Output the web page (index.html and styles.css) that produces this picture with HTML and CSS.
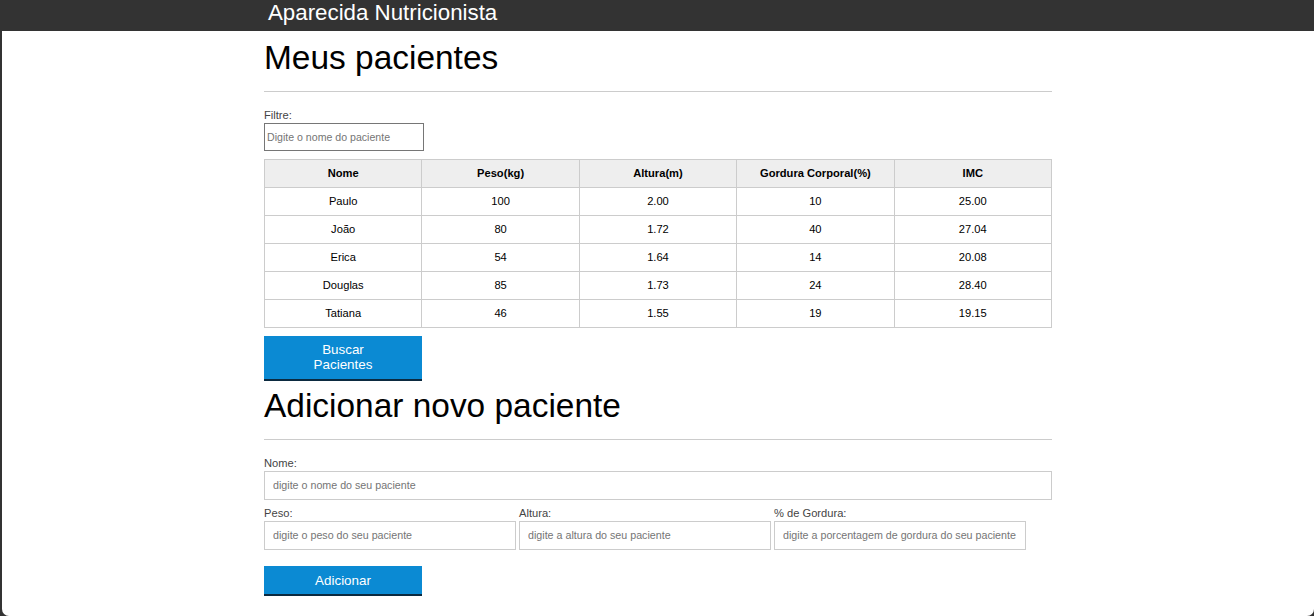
FILE: index.html
```html
<!DOCTYPE html>
<html lang="pt-BR">
<head>
<meta charset="utf-8">
<title>Aparecida Nutricionista</title>
<link rel="stylesheet" href="styles.css">
</head>
<body>
<header class="topbar">
  <div class="container">
    <h1 class="brand">Aparecida Nutricionista</h1>
  </div>
</header>
<main class="page">
  <div class="container">
    <section class="section">
      <h2 class="title">Meus pacientes</h2>
      <hr class="divider">
      <label class="label" for="filtro">Filtre:</label>
      <input class="filter-input" id="filtro" type="text" placeholder="Digite o nome do paciente">
      <table class="table">
        <thead>
          <tr><th>Nome</th><th>Peso(kg)</th><th>Altura(m)</th><th>Gordura Corporal(%)</th><th>IMC</th></tr>
        </thead>
        <tbody>
          <tr><td>Paulo</td><td>100</td><td>2.00</td><td>10</td><td>25.00</td></tr>
          <tr><td>João</td><td>80</td><td>1.72</td><td>40</td><td>27.04</td></tr>
          <tr><td>Erica</td><td>54</td><td>1.64</td><td>14</td><td>20.08</td></tr>
          <tr><td>Douglas</td><td>85</td><td>1.73</td><td>24</td><td>28.40</td></tr>
          <tr><td>Tatiana</td><td>46</td><td>1.55</td><td>19</td><td>19.15</td></tr>
        </tbody>
      </table>
      <button class="btn btn-search" type="button">Buscar<br>Pacientes</button>
    </section>
    <section class="section">
      <h2 class="title title-add">Adicionar novo paciente</h2>
      <hr class="divider">
      <form class="form">
        <div class="field">
          <label class="label" for="nome">Nome:</label>
          <input class="form-input" id="nome" type="text" placeholder="digite o nome do seu paciente">
        </div>
        <div class="row">
          <div class="field field-third">
            <label class="label" for="peso">Peso:</label>
            <input class="form-input" id="peso" type="text" placeholder="digite o peso do seu paciente">
          </div>
          <div class="field field-third">
            <label class="label" for="altura">Altura:</label>
            <input class="form-input" id="altura" type="text" placeholder="digite a altura do seu paciente">
          </div>
          <div class="field field-third">
            <label class="label" for="gordura">% de Gordura:</label>
            <input class="form-input" id="gordura" type="text" placeholder="digite a porcentagem de gordura do seu paciente">
          </div>
        </div>
        <button class="btn btn-add" type="button">Adicionar</button>
      </form>
    </section>
  </div>
</main>
</body>
</html>
```

FILE: styles.css
```css
* {
  box-sizing: border-box;
}

html, body {
  margin: 0;
  padding: 0;
  background: #333333;
  font-family: "Liberation Sans", Arial, sans-serif;
  font-size: 11.15px;
  color: #000;
}

.container {
  width: 788px;
  margin: 0 auto;
}

.topbar {
  height: 31px;
  background: #333333;
}

.topbar .container {
  padding-left: 5px;
}

.brand {
  margin: 0;
  font-weight: normal;
  font-size: 22.3px;
  line-height: 26px;
  color: #ffffff;
}

.page {
  margin-left: 2px;
  background: #ffffff;
  min-height: 585px;
  border-radius: 0 0 7px 7px;
  overflow: hidden;
}

.title {
  margin: 8px 0 14px;
  font-size: 33.45px;
  font-weight: normal;
  line-height: 38px;
}

.title-add {
  margin-top: 6px;
}

.divider {
  margin: 0;
  border: 0;
  border-top: 1px solid #cccccc;
  height: 0;
}

.label {
  display: block;
  line-height: 15px;
  color: #444444;
}

.section > .label {
  margin-top: 16px;
}

.filter-input {
  display: block;
  width: 160px;
  height: 28px;
  padding: 1px 2px;
  border: 1px solid #767676;
  font-family: inherit;
  font-size: 10.6px;
  color: #000;
  background: #fff;
}

.table {
  width: 788px;
  margin-top: 8px;
  border-collapse: collapse;
  table-layout: fixed;
}

.table th,
.table td {
  width: 20%;
  padding: 7px 4px;
  line-height: 13px;
  border: 1px solid #cccccc;
  text-align: center;
  font-size: 11.15px;
}

.table th {
  background: #eeeeee;
  font-weight: bold;
}

.btn {
  display: block;
  width: 158px;
  border: 0;
  border-bottom: 2px solid #0b2a40;
  background: #0b8ad3;
  color: #ffffff;
  font-family: inherit;
  font-size: 13.4px;
  line-height: 15.4px;
  padding: 6px 0;
  text-align: center;
  cursor: pointer;
}

.btn-search {
  margin-top: 8px;
}

.form {
  margin: 0;
}

.form > .field {
  margin-top: 16px;
}

.form-input {
  display: block;
  width: 100%;
  height: 29px;
  padding: 0 8px;
  border: 1px solid #cccccc;
  font-family: inherit;
  font-size: 10.7px;
  color: #000;
  background: #fff;
}

.row {
  display: flex;
  gap: 3px;
  margin-top: 6px;
}

.field-third {
  width: 252px;
}

.btn-add {
  margin-top: 16px;
  padding: 7px 0 6px;
}
```
